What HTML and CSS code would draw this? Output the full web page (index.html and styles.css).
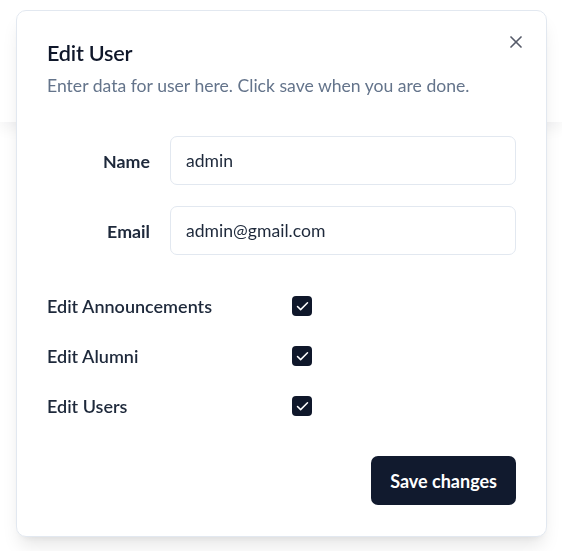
FILE: index.html
```html
<!DOCTYPE html>
<html lang="en">
<head>
<meta charset="utf-8">
<title>Edit User</title>
<link rel="stylesheet" href="styles.css">
</head>
<body>
<div class="page">
  <div class="page-header"></div>
</div>
<div class="dialog" role="dialog">
  <div class="dialog-header">
    <h2 class="dialog-title">Edit User</h2>
    <p class="dialog-desc">Enter data for user here. Click save when you are done.</p>
  </div>
  <div class="fields">
    <label class="field-label" for="name">Name</label>
    <input class="field-input" id="name" value="admin">
    <label class="field-label" for="email">Email</label>
    <input class="field-input" id="email" value="admin@gmail.com">
  </div>
  <div class="perms">
    <span class="perm-label">Edit Announcements</span>
    <span class="checkbox"><svg viewBox="0 0 24 24"><path d="M20 6 9 17l-5-5"/></svg></span>
    <span class="perm-label">Edit Alumni</span>
    <span class="checkbox"><svg viewBox="0 0 24 24"><path d="M20 6 9 17l-5-5"/></svg></span>
    <span class="perm-label">Edit Users</span>
    <span class="checkbox"><svg viewBox="0 0 24 24"><path d="M20 6 9 17l-5-5"/></svg></span>
  </div>
  <div class="footer">
    <button class="save-btn" type="button">Save changes</button>
  </div>
  <button class="close-btn" type="button" aria-label="Close">
    <svg viewBox="0 0 24 24"><path d="M18 6 6 18"/><path d="m6 6 12 12"/></svg>
  </button>
</div>
</body>
</html>
```
FILE: styles.css
```css
* { box-sizing: border-box; }
html, body { margin: 0; padding: 0; background: #ffffff; }
body {
  font-family: Lato, "Noto Sans", sans-serif;
  color: #0f172a;
  width: 562px;
  height: 551px;
  overflow: hidden;
}
.page { height: 551px; }
.page-header {
  height: 122px;
  background: #ffffff;
  box-shadow: 0 6px 14px rgba(15, 23, 42, 0.06);
}
.dialog {
  position: fixed;
  left: 16px;
  top: 10px;
  width: 531px;
  height: 527px;
  background: #ffffff;
  border: 1px solid #e2e8f0;
  border-radius: 10px;
  box-shadow: 0 12px 18px -4px rgba(0, 0, 0, 0.10), 0 5px 8px -5px rgba(0, 0, 0, 0.08);
  padding: 29px 30px 30px 30px;
  display: flex;
  flex-direction: column;
}
.dialog-header { display: flex; flex-direction: column; gap: 8px; }
.dialog-title {
  margin: 0;
  font-size: 21.6px;
  font-weight: 600;
  line-height: 26px;
  letter-spacing: -0.2px;
}
.dialog-desc {
  margin: 0;
  font-size: 17.6px;
  line-height: 24px;
  color: #64748b;
}
.fields {
  margin-top: 38px;
  display: grid;
  grid-template-columns: 103px 1fr;
  column-gap: 20px;
  row-gap: 21px;
  align-items: center;
}
.field-label {
  text-align: right;
  font-size: 17.8px;
  font-weight: 700;
  color: #1e293b;
}
.field-input {
  height: 49px;
  width: 100%;
  border: 1px solid #e2e8f0;
  border-radius: 7px;
  padding: 0 15px;
  font-family: inherit;
  font-size: 17.6px;
  color: #1e293b;
  background: #ffffff;
  outline: none;
}
.perms {
  margin-top: 36px;
  display: grid;
  grid-template-columns: 245px 1fr;
  row-gap: 20px;
  align-items: center;
}
.perm-label {
  font-size: 18px;
  font-weight: 600;
  line-height: 30px;
  color: #1e293b;
}
.checkbox {
  width: 20px;
  height: 20px;
  border-radius: 4px;
  background: #0f172a;
  display: flex;
  align-items: center;
  justify-content: center;
}
.checkbox svg {
  width: 15px;
  height: 15px;
  fill: none;
  stroke: #ffffff;
  stroke-width: 2.4;
  stroke-linecap: round;
  stroke-linejoin: round;
}
.footer {
  margin-top: 35px;
  display: flex;
  justify-content: flex-end;
}
.save-btn {
  height: 49px;
  padding: 0 19px;
  border: none;
  border-radius: 7px;
  background: #111a2e;
  color: #ffffff;
  font-family: inherit;
  font-size: 18px;
  font-weight: 700;
}
.close-btn {
  position: absolute;
  top: 21px;
  right: 20px;
  width: 20px;
  height: 20px;
  padding: 0;
  border: none;
  background: transparent;
  opacity: 0.7;
}
.close-btn svg {
  width: 20px;
  height: 20px;
  fill: none;
  stroke: #0f172a;
  stroke-width: 2;
  stroke-linecap: round;
  stroke-linejoin: round;
}
```
